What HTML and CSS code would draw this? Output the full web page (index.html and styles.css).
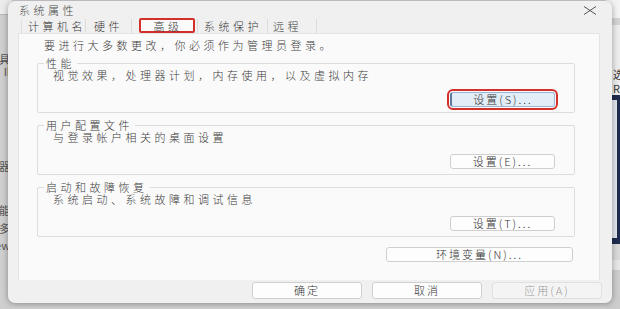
FILE: index.html
```html
<!DOCTYPE html>
<html lang="zh-CN">

<head>

    <meta charset="UTF-8">
    <meta name="viewport" content="width=device-width, initial-scale=1.0">
    <title>系统属性</title>

    <link rel="stylesheet" href="styles.css">

</head>

<body>

    <div class="desk-left">
        <span class="frag" style="top: 54px">工具</span>
        <span class="frag" style="top: 66px">Il</span>
        <span class="frag" style="top: 161px">处理器</span>
        <span class="frag" style="top: 205px">性能</span>
        <span class="frag" style="top: 223px">更多</span>
        <span class="frag" style="top: 240px">new</span>
    </div>

    <div class="desk-right">
        <div class="dr-top"></div>
        <div class="dr-band"></div>
        <div class="dr-text">
            <span>选</span>
            <span>Ri</span>
        </div>
        <div class="dr-window"></div>
        <div class="dr-bottom"></div>
    </div>

    <div class="dialog">

        <div class="titlebar">
            <span class="title">系统属性</span>
            <svg class="close" width="14" height="9" viewBox="0 0 14 9">
                <path d="M1 0.5 L13 8.5 M13 0.5 L1 8.5" stroke="#555" stroke-width="1" fill="none" />
            </svg>
        </div>

        <div class="tabs">
            <span class="tab tab-name">计算机名</span>
            <span class="tab tab-hw">硬件</span>
            <span class="tab tab-active">高级</span>
            <span class="tab tab-protect">系统保护</span>
            <span class="tab tab-remote">远程</span>
        </div>

        <div class="panel">

            <div class="intro">要进行大多数更改，你必须作为管理员登录。</div>

            <fieldset class="group">
                <legend>性能</legend>
                <div class="desc">视觉效果，处理器计划，内存使用，以及虚拟内存</div>
                <div class="btn-row">
                    <button class="btn btn-small btn-focus">设置(S)...</button>
                </div>
            </fieldset>

            <fieldset class="group">
                <legend>用户配置文件</legend>
                <div class="desc">与登录帐户相关的桌面设置</div>
                <div class="btn-row">
                    <button class="btn btn-small">设置(E)...</button>
                </div>
            </fieldset>

            <fieldset class="group">
                <legend>启动和故障恢复</legend>
                <div class="desc">系统启动、系统故障和调试信息</div>
                <div class="btn-row">
                    <button class="btn btn-small">设置(T)...</button>
                </div>
            </fieldset>

            <div class="env-row">
                <button class="btn btn-env">环境变量(N)...</button>
            </div>

        </div>

        <div class="footer">
            <button class="btn btn-foot">确定</button>
            <button class="btn btn-foot">取消</button>
            <button class="btn btn-foot btn-disabled">应用(A)</button>
        </div>

    </div>

</body>

</html>
```

FILE: styles.css
```css
html,
body {
    width: 100%;
    height: 100%;
    margin: 0px;
    overflow: hidden;
}

body {
    position: relative;
    background-color: #d2d2d2;
    font-family: "Noto Sans CJK SC", "Noto Sans", sans-serif;
    color: #3c3c3c;
}

/* windows behind the dialog */

.desk-left {
    position: absolute;
    left: 0;
    top: 0;
    width: 12px;
    height: 100%;
    background: linear-gradient(#ececec 0, #ececec 14px, #b9b9b9 14px, #b9b9b9 15px, #cfcfcf 15px);
    overflow: hidden;
}

.desk-left .frag {
    position: absolute;
    right: 2px;
    font-size: 11px;
    line-height: 11px;
    color: #555;
    white-space: nowrap;
}

.desk-right {
    position: absolute;
    left: 606px;
    top: 0;
    width: 14px;
    height: 100%;
    display: flex;
    flex-direction: column;
}

.dr-top {
    height: 18px;
    background-color: #f3f3f3;
}

.dr-band {
    height: 7px;
    background-color: #d4d4d4;
}

.dr-text {
    height: 70px;
    background-color: #ececec;
    display: flex;
    flex-direction: column;
    padding: 42px 0 0 7px;
    box-sizing: border-box;
    font-size: 11px;
    line-height: 14px;
    color: #333;
}

.dr-window {
    height: 138px;
    background-color: #e2e6ed;
    border: 3px solid #1e2c4e;
    border-top-width: 5px;
    border-bottom-width: 6px;
}

.dr-bottom {
    flex: 1;
    background: linear-gradient(#d9d9d9 0, #d9d9d9 16px, #e6e6e6 16px, #e6e6e6 26px, #cdcdcd 26px);
}

/* dialog */

.dialog {
    position: absolute;
    left: 8px;
    top: 1px;
    width: 604px;
    height: 302px;
    background-color: #f0f0f0;
    border-radius: 7px;
    box-shadow: 0 1px 6px rgba(0, 0, 0, 0.35);
    display: flex;
    flex-direction: column;
    font-size: 11px;
    font-weight: 300;
    letter-spacing: 3.5px;
}

.titlebar {
    height: 18px;
    padding: 0 15px 0 11px;
    display: flex;
    align-items: center;
    justify-content: space-between;
    line-height: 18px;
    color: #484848;
}

.tabs {
    height: 14px;
    display: flex;
    padding-left: 13px;
    line-height: 14px;
}

.tab {
    display: block;
    height: 14px;
    border-right: 1px solid #dcdcdc;
    box-sizing: border-box;
    white-space: nowrap;
    color: #3a3a3a;
}

.tab-name {
    width: 65px;
    padding-left: 6px;
    border-left: 1px solid #e0e0e0;
}

.tab-hw {
    width: 46px;
    padding-left: 8px;
}

.tab-active {
    width: 56px;
    height: 15px;
    margin: -1px 2px 0 7px;
    border: 2px solid #d3302b;
    border-radius: 2px;
    background-color: #fafafa;
    text-align: center;
    line-height: 12px;
    padding-left: 2px;
}

.tab-protect {
    width: 71px;
    padding-left: 6px;
    border-left: 1px solid #dcdcdc;
}

.tab-remote {
    width: 49px;
    padding-left: 5px;
}

.panel {
    height: 247px;
    margin: 0 12px 0 10px;
    box-sizing: border-box;
    background-color: #fafafa;
    border: 1px solid #e4e4e4;
    border-bottom: none;
    padding-top: 5px;
}

.intro {
    line-height: 13px;
    padding-left: 25px;
    white-space: nowrap;
}

.group {
    margin: 5px 24px 0 18px;
    padding: 0 6px 5px 6px;
    min-width: 0;
    border: 1px solid #dddddd;
    border-radius: 2px;
}

.group + .group {
    margin-top: 6px;
}

.group legend {
    padding: 0 2px;
    line-height: 12px;
    color: #3a3a3a;
}

.desc {
    padding-left: 9px;
    line-height: 13px;
    white-space: nowrap;
}

.btn-row {
    display: flex;
    justify-content: flex-end;
    padding: 10px 13px 0 0;
}

.btn {
    font-family: inherit;
    font-size: 11px;
    font-weight: 300;
    letter-spacing: 2px;
    color: #333;
    background-color: #fdfdfd;
    border: 1px solid #cfcfcf;
    border-radius: 3px;
    padding: 0;
    margin: 0;
    line-height: 13px;
}

.btn-small {
    width: 105px;
    height: 15px;
}

.btn-focus {
    background-color: #e2edf8;
    border-color: #9ab6d6;
    border-left: 2px solid #5f7b9c;
    outline: 2px solid #d3302b;
    outline-offset: 1px;
}

.env-row {
    display: flex;
    justify-content: flex-end;
    padding: 10px 26px 0 0;
}

.btn-env {
    width: 187px;
    height: 15px;
}

.footer {
    flex: 1;
    display: flex;
    justify-content: flex-end;
    align-items: flex-start;
    gap: 10px;
    padding: 2px 10px 0 0;
}

.btn-foot {
    width: 110px;
    height: 17px;
    line-height: 15px;
}

.btn-disabled {
    color: #9a9a9a;
    background-color: #f4f4f4;
    border-color: #e0e0e0;
}
```
